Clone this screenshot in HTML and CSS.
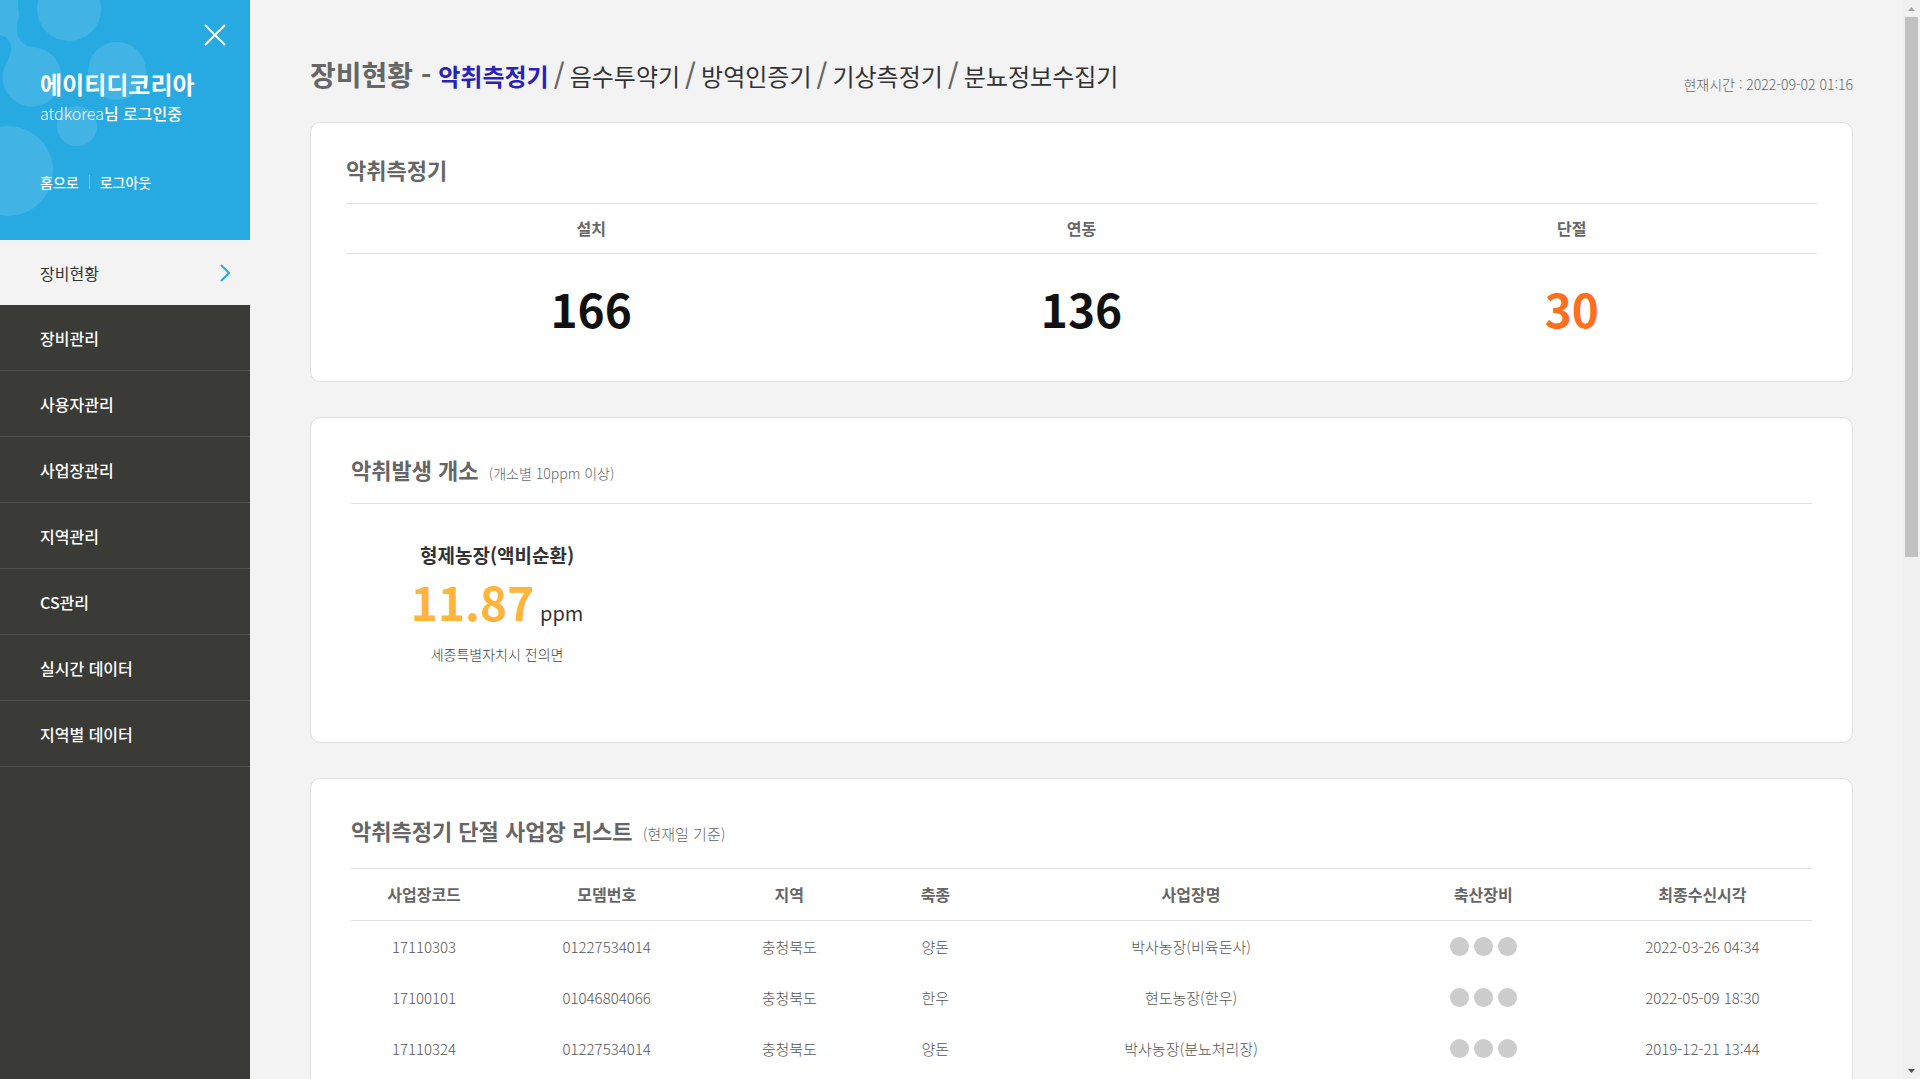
FILE: index.html
```html
<!DOCTYPE html>
<html lang="ko">
<head>
<meta charset="utf-8">
<meta name="viewport" content="width=device-width, initial-scale=1">
<title>장비현황</title>
<link rel="stylesheet" href="styles.css">
</head>
<body>
<div class="app">
  <aside class="sidebar">
    <header class="profile">
      <svg class="profile-bubbles" width="170" height="240" viewBox="0 0 170 240" aria-hidden="true">
        <circle cx="69" cy="9" r="32"/>
        <circle cx="117" cy="71" r="29"/>
        <circle cx="77" cy="126" r="20"/>
        <circle cx="8" cy="171" r="45"/>
        <path d="M0 0H18V8Q20 13 18 20C14 34 20 46 34 47.500A29.500 29.500 0 1 1 8 60Q12 52 11 45Q8 36 0 35Z"/>
      </svg>
      <button class="close" type="button" aria-label="메뉴 닫기">
        <svg width="22" height="22" viewBox="0 0 22 22"><path d="M1 1L21 21M21 1L1 21"/></svg>
      </button>
      <div class="profile-text">
        <strong class="company">에이티디코리아</strong>
        <p class="login"><span>atdkorea</span>님 로그인중</p>
        <div class="profile-links"><a href="#">홈으로</a><a href="#">로그아웃</a></div>
      </div>
    </header>
    <nav class="menu">
      <a class="active" href="#">장비현황<svg width="10" height="18" viewBox="0 0 10 18" aria-hidden="true"><path d="M1 1L9 9L1 17"/></svg></a>
      <a href="#">장비관리</a>
      <a href="#">사용자관리</a>
      <a href="#">사업장관리</a>
      <a href="#">지역관리</a>
      <a href="#">CS관리</a>
      <a href="#">실시간 데이터</a>
      <a href="#">지역별 데이터</a>
    </nav>
  </aside>
  <main class="content">
    <header class="page-head">
      <h1><span class="name">장비현황 -</span>
        <a class="current" href="#">악취측정기</a><span class="slash">/</span>
        <a href="#">음수투약기</a><span class="slash">/</span>
        <a href="#">방역인증기</a><span class="slash">/</span>
        <a href="#">기상측정기</a><span class="slash">/</span>
        <a href="#">분뇨정보수집기</a>
      </h1>
      <p class="now">현재시간 : 2022-09-02 01:16</p>
    </header>

    <section class="card summary">
      <h2>악취측정기</h2>
      <table class="stats">
        <thead><tr><th>설치</th><th>연동</th><th>단절</th></tr></thead>
        <tbody><tr><td>166</td><td>136</td><td class="alert">30</td></tr></tbody>
      </table>
    </section>

    <section class="card odor">
      <h2>악취발생 개소 <small>(개소별 10ppm 이상)</small></h2>
      <ul class="sites">
        <li>
          <h3>형제농장(액비순환)</h3>
          <p class="reading"><strong>11.87</strong> ppm</p>
          <p class="place">세종특별자치시 전의면</p>
        </li>
      </ul>
    </section>

    <section class="card list">
      <h2>악취측정기 단절 사업장 리스트 <small>(현재일 기준)</small></h2>
      <table class="farms">
        <colgroup><col class="w10"><col class="w15"><col class="w10"><col class="w10"><col class="w25"><col class="w15"><col class="w15"></colgroup>
        <thead><tr><th>사업장코드</th><th>모뎀번호</th><th>지역</th><th>축종</th><th>사업장명</th><th>축산장비</th><th>최종수신시각</th></tr></thead>
        <tbody>
          <tr><td>17110303</td><td>01227534014</td><td>충청북도</td><td>양돈</td><td>박사농장(비육돈사)</td><td><span class="dots"><i></i><i></i><i></i></span></td><td>2022-03-26 04:34</td></tr>
          <tr><td>17100101</td><td>01046804066</td><td>충청북도</td><td>한우</td><td>현도농장(한우)</td><td><span class="dots"><i></i><i></i><i></i></span></td><td>2022-05-09 18:30</td></tr>
          <tr><td>17110324</td><td>01227534014</td><td>충청북도</td><td>양돈</td><td>박사농장(분뇨처리장)</td><td><span class="dots"><i></i><i></i><i></i></span></td><td>2019-12-21 13:44</td></tr>
        </tbody>
      </table>
    </section>
  </main>
  <div class="scrollbar" aria-hidden="true">
    <svg width="17" height="17" viewBox="0 0 17 17"><path d="M5 11L8.500 7L12 11Z" fill="#a3a3a3"/></svg>
    <div class="track"><div class="thumb"></div></div>
    <svg width="17" height="17" viewBox="0 0 17 17"><path d="M5 7L8.500 11L12 7Z" fill="#505050"/></svg>
  </div>
</div>
</body>
</html>
```
FILE: styles.css
```css
* { box-sizing: border-box; margin: 0; padding: 0; }

body {
  background: #f3f3f3;
  color: #666;
  font-family: "Noto Sans CJK KR", "Noto Sans", sans-serif;
  font-size: 15px;
  line-height: 24px;
}

a { color: inherit; text-decoration: none; }
ul { list-style: none; }

.app { display: flex; height: 100vh; overflow: hidden; }

/* sidebar */
.sidebar { flex: 0 0 250px; background: #3a3a36; color: #fff; }
.profile { position: relative; height: 240px; padding: 67px 40px 0; background: #27aae1; }
.profile-bubbles { position: absolute; left: 0; top: 0; fill: #41b4e5; }
.close { position: absolute; top: 24px; right: 24px; width: 22px; height: 22px; border: 0; background: none; cursor: pointer; }
.close svg { display: block; fill: none; stroke: #fff; stroke-width: 2; }
.profile-text { position: relative; }
.company { display: block; font-size: 24px; line-height: 34px; font-weight: 700; white-space: nowrap; }
.login { font-size: 16px; font-weight: 500; white-space: nowrap; }
.login span { font-weight: 300; }
.profile-links { display: flex; align-items: center; margin-top: 45px; font-size: 14px; line-height: 24px; font-weight: 500; }
.profile-links a + a { display: flex; align-items: center; }
.profile-links a + a::before { content: ""; width: 1px; height: 14px; margin: 0 10px; background: #6cc5eb; }

.menu a {
  display: flex;
  align-items: center;
  justify-content: space-between;
  height: 66px;
  padding: 0 20px 0 40px;
  border-bottom: 1px solid #50504c;
  font-size: 16px;
  font-weight: 500;
}
.menu .active { height: 65px; border: 0; background: #f3f3f3; color: #333; font-weight: 400; }
.menu svg { fill: none; stroke: #27aae1; stroke-width: 2; }

/* page */
.content { flex: 1; min-width: 0; padding: 46px 50px 0 60px; }
.page-head { display: flex; justify-content: space-between; align-items: flex-end; height: 52px; margin-bottom: 24px; }
.page-head h1 { display: flex; align-items: baseline; gap: 5px; height: 52px; font-size: 28px; line-height: 56px; font-weight: 700; white-space: nowrap; }
.page-head h1 a { color: #333; font-size: 24px; font-weight: 400; }
.page-head h1 .current { color: #2a22b8; font-weight: 700; }
.page-head .name { margin-right: 2px; }
.slash { font-weight: 500; }
.now { font-size: 14px; font-weight: 300; margin-bottom: 2px; }

.card { margin-bottom: 35px; padding: 0 40px; border: 1px solid #dfdfdf; border-radius: 10px; background: #fff; }
.card h2 { font-size: 22px; line-height: 32px; font-weight: 700; border-bottom: 1px solid #dfdfdf; }
.card small { margin-left: 4px; font-size: 14px; font-weight: 300; }

table { width: 100%; border-collapse: separate; border-spacing: 0; table-layout: fixed; text-align: center; }
th { height: 50px; padding-bottom: 2px; border-bottom: 1px solid #dfdfdf; font-size: 16px; font-weight: 700; }

.summary { height: 260px; padding: 30px 35px 0; }
.summary h2 { height: 51px; }
.stats td { height: 108px; color: #111; font-size: 46px; font-weight: 700; }
.stats .alert { color: #ff6f1e; }

.odor { height: 326px; padding-top: 35px; }
.odor h2 { height: 51px; }
.sites { display: grid; grid-template-columns: repeat(5, 1fr); padding-top: 37px; text-align: center; }
.sites h3 { color: #333; font-size: 19px; line-height: 28px; font-weight: 700; }
.reading { margin-top: 5px; color: #333; font-size: 20px; line-height: 54px; }
.reading strong { color: #ffb43c; font-size: 46px; font-weight: 700; }
.place { line-height: 28px; font-size: 14px; font-weight: 300; color: #444; }

.list { padding-top: 35px; margin-bottom: 0; height: 100vh; }
.list h2 { height: 55px; }
.list small { font-size: 15px; }
.farms th { height: 52px; }
.farms td { height: 51px; font-weight: 300; color: #555; }
.w10 { width: 10%; }
.w15 { width: 15%; }
.w25 { width: 25%; }
.dots { display: flex; justify-content: center; gap: 5px; }
.dots i { width: 19px; height: 19px; border-radius: 50%; background: #ccc; }

/* scroll indicator */
.scrollbar { display: flex; flex-direction: column; flex: 0 0 17px; background: #f1f1f1; }
.track { flex: 1; padding: 0 2px; }
.thumb { height: 50vh; background: #c1c1c1; }
```
